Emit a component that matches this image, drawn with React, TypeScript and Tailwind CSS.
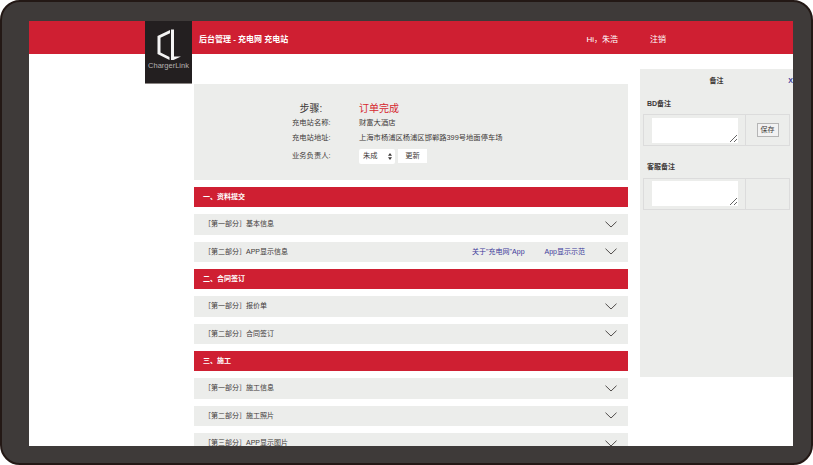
const Chevron = () => (
  <svg width="12" height="7" viewBox="0 0 12 7" fill="none" className="shrink-0">
    <polyline points="0.5,0.7 6,6 11.5,0.7" stroke="#3e3a39" strokeWidth="0.9" />
  </svg>
)

const Logo = () => (
  <div className="absolute left-[116px] top-0 flex h-[63px] w-[47px] flex-col items-center border-b border-[#8a8583] bg-[#231f20]">
    <svg width="47" height="41" viewBox="0 0 47 41" className="shrink-0">
      <path d="M25 9 L12.5 15 V33 L24.5 39 V36 L15.5 31.5 V16.8 L25 12.2 Z" fill="#f4f4f4" />
      <path d="M26 8.5 H29 V35.5 H36 L28.5 39 H26 Z" fill="#f4f4f4" />
    </svg>
    <span className="mt-[-1px] text-[7.5px] leading-[10px] font-light text-[#b5b2b1]">ChargerLink</span>
  </div>
)

const Section = ({ title }: { title: string }) => (
  <div className="mb-[7px] flex h-[20px] items-center bg-[#cf1f32] pl-[9px] text-[7px] font-bold text-white">{title}</div>
)

const Row = ({ title, links }: { title: string; links?: boolean }) => (
  <div className="mb-[7px] flex h-[20.5px] items-center bg-[#ecedeb] pr-[11px] pl-[10px] text-[7px] text-[#3e3a39]">
    <span>{title}</span>
    <div className="ml-auto flex items-center gap-[20px]">
      {links && <span className="text-[#3d3a9a]">关于"充电网"App</span>}
      {links && <span className="text-[#3d3a9a]">App显示示范</span>}
      <Chevron />
    </div>
  </div>
)

const NoteTable = ({ save }: { save?: boolean }) => (
  <div className="mx-[3px] flex h-[32px] border border-[#dcdcdc]">
    <div className="flex w-[102px] items-center justify-center border-r border-[#dcdcdc]">
      <textarea className="h-[25px] w-[86px] bg-white" />
    </div>
    <div className="flex flex-1 items-center justify-center">
      {save && <button className="h-[14px] w-[22px] border border-[#b5b5b5] bg-[#f2f2f2] text-[7px] font-normal text-[#3e3a39]">保存</button>}
    </div>
  </div>
)

export default function App() {
  return (
    <div className="h-[465px] w-[813px] overflow-hidden bg-white font-['Liberation_Sans','Noto_Sans_CJK_SC',sans-serif]">
      <div className="h-[465px] w-[813px] rounded-[20px] border-2 border-[#231815] bg-[#3e3a39] pt-[19px] pl-[27px]">
        <div className="relative h-[425px] w-[764px] overflow-hidden bg-white">
          <header className="flex h-[33px] items-center bg-[#cf1f32] pt-[5px] pr-[127px] pl-[170px] text-[8px] text-white">
            <span className="font-bold">后台管理 - 充电网 充电站</span>
            <span className="ml-auto">Hi，朱浩</span>
            <span className="ml-[32px]">注销</span>
          </header>
          <Logo />
          <div className="flex items-start pl-[165px]">
            <main className="w-[434px] shrink-0 pt-[30px]">
              <div className="mb-[7px] h-[96px] bg-[#ecedeb] pt-[17px] pl-[98px] text-[7.3px] text-[#3e3a39]">
                <div className="flex h-[14px] items-center">
                  <span className="mr-[29px] w-[38px] text-center text-[10px]">步骤:</span>
                  <span className="text-[10px] text-[#d6282f]">订单完成</span>
                </div>
                <div className="mt-[1px] flex h-[15px] items-center">
                  <span className="w-[67px]">充电站名称:</span>
                  <span>财富大酒店</span>
                </div>
                <div className="flex h-[15px] items-center">
                  <span className="w-[67px]">充电站地址:</span>
                  <span>上海市杨浦区杨浦区邯郸路399号地面停车场</span>
                </div>
                <div className="mt-[2px] flex h-[16px] items-center">
                  <span className="w-[67px]">业务负责人:</span>
                  <div className="relative h-[15px] w-[36px]">
                    <select className="h-[15px] w-[36px] appearance-none rounded-[2px] bg-white pl-[4px]">
                      <option>朱成</option>
                    </select>
                    <svg width="4" height="7" viewBox="0 0 4 7" className="pointer-events-none absolute top-[4px] right-[3px]">
                      <path d="M2 0 L4 2.8 H0 Z M2 7 L0 4.2 H4 Z" fill="#3e3a39" />
                    </svg>
                  </div>
                  <button className="ml-[3px] h-[14px] w-[29px] bg-white">更新</button>
                </div>
              </div>
              <Section title="一、资料提交" />
              <Row title="［第一部分］基本信息" />
              <Row title="［第二部分］APP显示信息" links />
              <Section title="二、合同签订" />
              <Row title="［第一部分］报价单" />
              <Row title="［第二部分］合同签订" />
              <Section title="三、施工" />
              <Row title="［第一部分］施工信息" />
              <Row title="［第二部分］施工照片" />
              <Row title="［第三部分］APP显示图片" />
            </main>
            <aside className="mt-[15px] ml-[12px] h-[308px] flex-1 bg-[#ecedeb] text-[7px] font-bold text-[#3e3a39]">
              <div className="relative pt-[7px] text-center">
                备注
                <span className="absolute top-[7px] right-0 text-[#3d3a9a]">X</span>
              </div>
              <div className="mt-[12px] mb-[5px] pl-[7px]">BD备注</div>
              <NoteTable save />
              <div className="mt-[16px] mb-[5px] pl-[7px]">客服备注</div>
              <NoteTable />
            </aside>
          </div>
        </div>
      </div>
    </div>
  )
}
